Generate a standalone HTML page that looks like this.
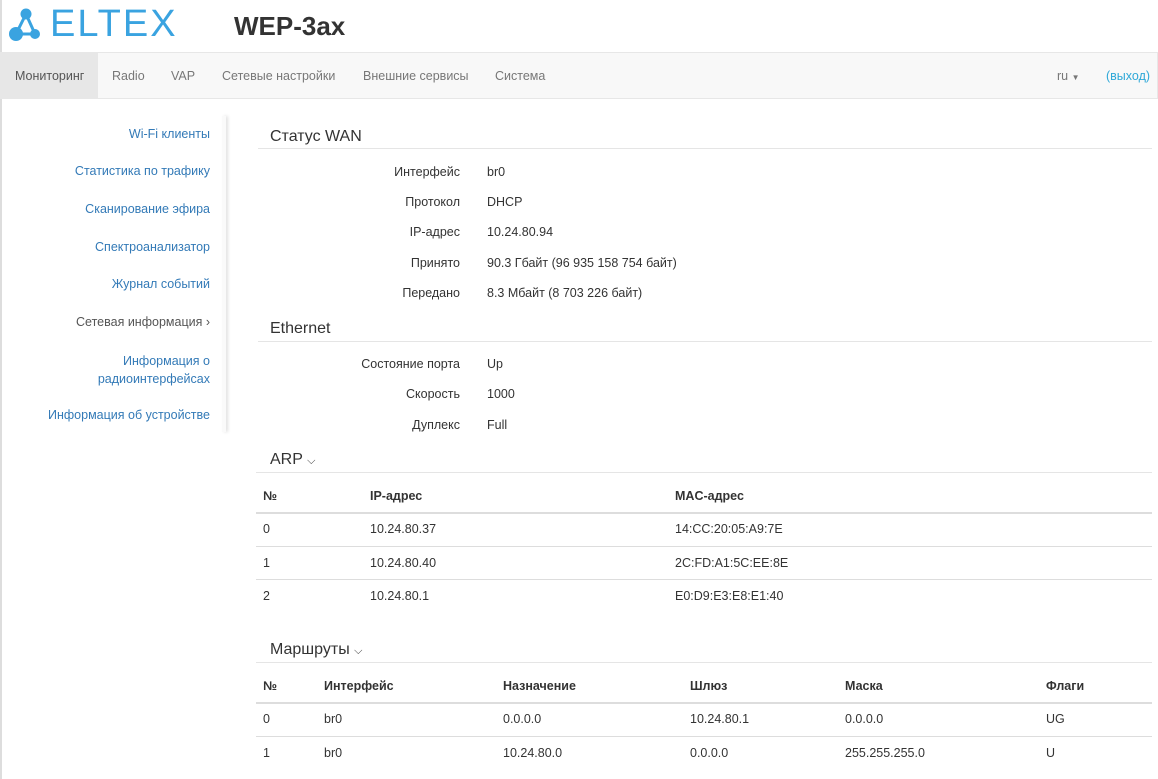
<!DOCTYPE html>
<html><head><meta charset="utf-8">
<style>
*{margin:0;padding:0;box-sizing:border-box}
body{width:1158px;height:779px;overflow:hidden;background:#fff;font-family:"Liberation Sans",sans-serif;font-size:12.5px;color:#333;position:relative}
.a{position:absolute;white-space:nowrap}
.nav{position:absolute;left:0;top:52px;width:1158px;height:47px;background:#f8f8f8;border:1px solid #e7e7e7}
.nav span{position:absolute;top:16px;color:#777}
.side{position:absolute;right:948px;text-align:right;color:#337ab7}
.h{position:absolute;left:270px;font-size:16px;color:#333}
.hl{position:absolute;left:258px;width:894px;height:1px;background:#e5e5e5}
.lbl{position:absolute;right:698px;}
.val{position:absolute;left:487px}
.tl{position:absolute;left:256px;width:896px;height:1px;background:#ddd}
b{font-weight:bold;position:absolute}
</style></head><body>
<div class="a" style="left:0;top:0;width:2px;height:779px;background:#ddd"></div>
<svg class="a" style="left:0;top:0" width="50" height="46" viewBox="0 0 50 46">
<g stroke="#3aa3e0" stroke-width="3" stroke-linecap="round" fill="none"><path d="M26 14 L16 34 L35 34 Z"/></g>
<g fill="#3aa3e0"><circle cx="26" cy="14" r="5.5"/><circle cx="16" cy="34" r="7"/><circle cx="35" cy="34" r="5"/></g>
</svg>
<div class="a" style="left:50px;top:3px;font-size:38px;letter-spacing:2px;color:#3aa3e0">ELTEX</div>
<div class="a" style="left:234px;top:11px;font-size:26px;font-weight:bold;color:#333">WEP-3ax</div>
<div class="nav">
<div style="position:absolute;left:0;top:0;width:97px;height:45px;background:#e7e7e7"></div>
<span style="left:14px;color:#555">Мониторинг</span>
<span style="left:111px">Radio</span>
<span style="left:170px">VAP</span>
<span style="left:221px">Сетевые настройки</span>
<span style="left:362px">Внешние сервисы</span>
<span style="left:494px">Система</span>
<span style="left:1056px">ru <span style="position:static;font-size:8px">▼</span></span>
<span style="left:1105px;color:#2ea8d8">(выход)</span>
</div>
<div class="a" style="left:222px;top:116px;width:4px;height:316px;box-shadow:2px 0 3px rgba(0,0,0,.12);background:#fafafa"></div>
<div class="side" style="top:127px">Wi-Fi клиенты</div>
<div class="side" style="top:164px">Статистика по трафику</div>
<div class="side" style="top:202px">Сканирование эфира</div>
<div class="side" style="top:240px">Спектроанализатор</div>
<div class="side" style="top:277px">Журнал событий</div>
<div class="side" style="top:315px;color:#555">Сетевая информация ›</div>
<div class="side" style="top:352px;line-height:18px">Информация о<br>радиоинтерфейсах</div>
<div class="side" style="top:408px">Информация об устройстве</div>

<div class="h" style="top:128px">Статус WAN</div><div class="hl" style="top:148px"></div>
<div class="lbl" style="top:165px">Интерфейс</div><div class="val" style="top:165px">br0</div>
<div class="lbl" style="top:195px">Протокол</div><div class="val" style="top:195px">DHCP</div>
<div class="lbl" style="top:225px">IP-адрес</div><div class="val" style="top:225px">10.24.80.94</div>
<div class="lbl" style="top:256px">Принято</div><div class="val" style="top:256px">90.3 Гбайт (96 935 158 754 байт)</div>
<div class="lbl" style="top:286px">Передано</div><div class="val" style="top:286px">8.3 Мбайт (8 703 226 байт)</div>
<div class="h" style="top:320px">Ethernet</div><div class="hl" style="top:341px"></div>
<div class="lbl" style="top:357px">Состояние порта</div><div class="val" style="top:357px">Up</div>
<div class="lbl" style="top:387px">Скорость</div><div class="val" style="top:387px">1000</div>
<div class="lbl" style="top:418px">Дуплекс</div><div class="val" style="top:418px">Full</div>

<div class="h" style="top:451px">ARP <span style="font-size:11px">⌵</span></div><div class="hl" style="top:472px;left:256px;width:896px"></div>
<b style="left:263px;top:489px">№</b><b style="left:370px;top:489px">IP-адрес</b><b style="left:675px;top:489px">MAC-адрес</b>
<div class="tl" style="top:512px;height:2px"></div>
<div class="a" style="left:263px;top:522px">0</div><div class="a" style="left:370px;top:522px">10.24.80.37</div><div class="a" style="left:675px;top:522px">14:CC:20:05:A9:7E</div>
<div class="tl" style="top:546px"></div>
<div class="a" style="left:263px;top:556px">1</div><div class="a" style="left:370px;top:556px">10.24.80.40</div><div class="a" style="left:675px;top:556px">2C:FD:A1:5C:EE:8E</div>
<div class="tl" style="top:579px"></div>
<div class="a" style="left:263px;top:589px">2</div><div class="a" style="left:370px;top:589px">10.24.80.1</div><div class="a" style="left:675px;top:589px">E0:D9:E3:E8:E1:40</div>

<div class="h" style="top:641px">Маршруты <span style="font-size:11px">⌵</span></div><div class="hl" style="top:662px;left:256px;width:896px"></div>
<b style="left:263px;top:679px">№</b><b style="left:324px;top:679px">Интерфейс</b><b style="left:503px;top:679px">Назначение</b><b style="left:690px;top:679px">Шлюз</b><b style="left:845px;top:679px">Маска</b><b style="left:1046px;top:679px">Флаги</b>
<div class="tl" style="top:702px;height:2px"></div>
<div class="a" style="left:263px;top:712px">0</div><div class="a" style="left:324px;top:712px">br0</div><div class="a" style="left:503px;top:712px">0.0.0.0</div><div class="a" style="left:690px;top:712px">10.24.80.1</div><div class="a" style="left:845px;top:712px">0.0.0.0</div><div class="a" style="left:1046px;top:712px">UG</div>
<div class="tl" style="top:736px"></div>
<div class="a" style="left:263px;top:746px">1</div><div class="a" style="left:324px;top:746px">br0</div><div class="a" style="left:503px;top:746px">10.24.80.0</div><div class="a" style="left:690px;top:746px">0.0.0.0</div><div class="a" style="left:845px;top:746px">255.255.255.0</div><div class="a" style="left:1046px;top:746px">U</div>
</body></html>
